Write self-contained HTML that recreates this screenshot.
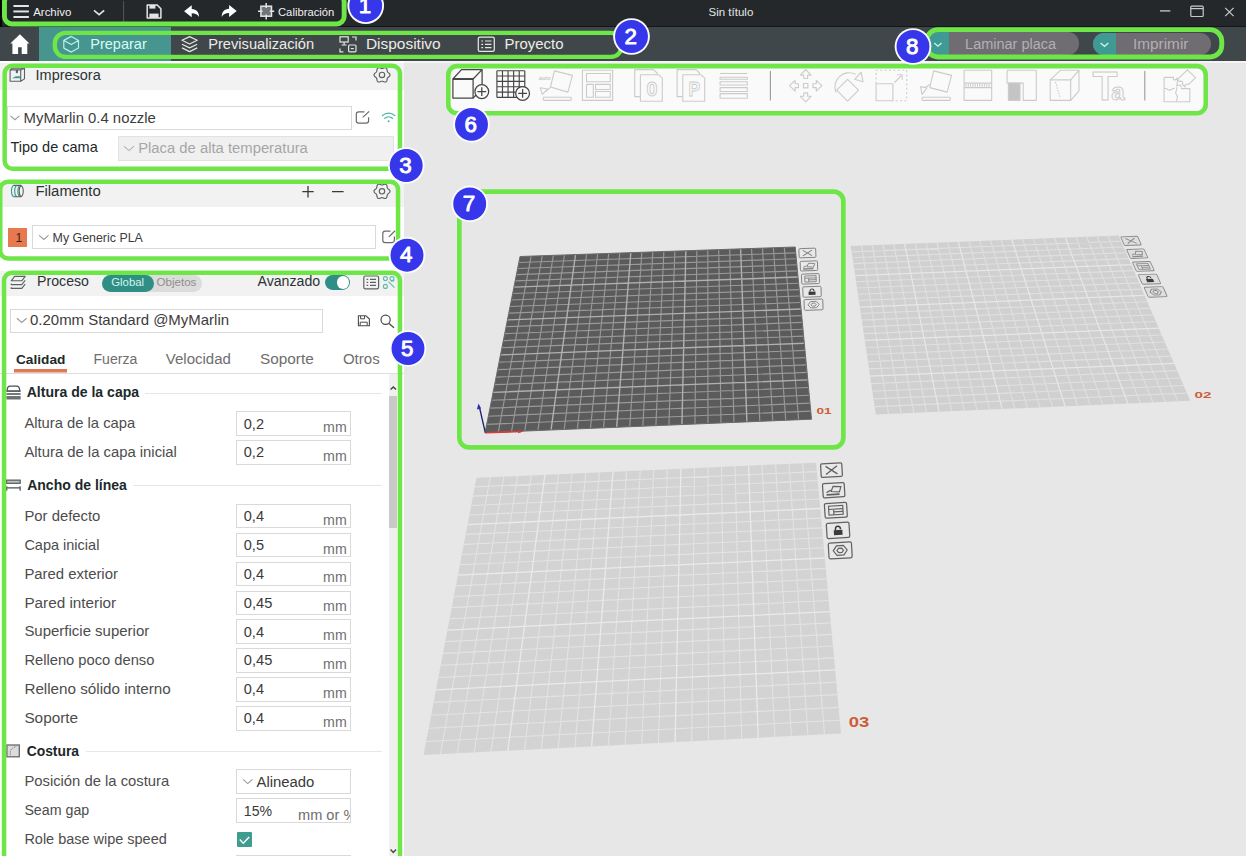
<!DOCTYPE html>
<html lang="es"><head><meta charset="utf-8"><title>Sin título</title>
<style>
html,body{margin:0;padding:0}
body{width:1246px;height:856px;overflow:hidden;position:relative;background:#e7e7e7;font-family:"Liberation Sans",sans-serif}
.b{position:absolute;box-sizing:border-box}
.t{position:absolute;white-space:nowrap;display:block}
svg{overflow:visible}
</style></head><body>
<div class="b" style="left:0.00px;top:0.00px;width:1246.00px;height:26.20px;background:#25282b;"></div>
<div class="b" style="left:0.00px;top:26.20px;width:1246.00px;height:0.80px;background:#141618;"></div>
<div class="b" style="left:0.00px;top:27.00px;width:1246.00px;height:34.00px;background:#40474a;"></div>
<div class="b" style="left:0.00px;top:0.00px;width:2.00px;height:26.50px;background:#050505;"></div>
<div class="b" style="left:39.00px;top:27.00px;width:131.60px;height:34.00px;background:#46968f;"></div>
<span class="t" style="left:33.20px;top:5.00px;font-size:11.45px;line-height:15px;color:#f2f2f2;">Archivo</span>
<span class="t" style="left:278.00px;top:5.00px;font-size:11.25px;line-height:15px;color:#f2f2f2;">Calibración</span>
<span class="t" style="left:708.50px;top:5.00px;font-size:11.52px;line-height:15px;color:#e6e6e6;">Sin título</span>
<span class="t" style="left:90.30px;top:35.00px;font-size:14.50px;line-height:19px;color:#d8fbf6;">Preparar</span>
<span class="t" style="left:208.20px;top:35.00px;font-size:14.66px;line-height:19px;color:#ecece6;">Previsualización</span>
<span class="t" style="left:365.90px;top:34.00px;font-size:15.47px;line-height:20px;color:#ecece6;">Dispositivo</span>
<span class="t" style="left:504.60px;top:34.00px;font-size:14.93px;line-height:19px;color:#ecece6;">Proyecto</span>
<div class="b" style="left:926.00px;top:32.40px;width:152.70px;height:22.30px;background:#6f6c72;border-radius:11.2px;overflow:hidden;"><div class="b" style="left:0;top:0;width:22.5px;height:100%;background:#3f9a94"></div></div>
<div class="b" style="left:1092.80px;top:32.60px;width:118.70px;height:22.10px;background:#6f6c72;border-radius:11.2px;overflow:hidden;"><div class="b" style="left:0;top:0;width:23.6px;height:100%;background:#3f9a94"></div></div>
<span class="t" style="left:965.10px;top:35.00px;font-size:14.49px;line-height:19px;color:#b3afb5;">Laminar placa</span>
<span class="t" style="left:1133.10px;top:34.00px;font-size:15.32px;line-height:20px;color:#b3afb5;">Imprimir</span>
<svg class="b" style="left:0.00px;top:0.00px;" width="1246.00" height="62.00" viewBox="0 0 1246.00 62.00"><path d="M13.4 6.0H28.9" stroke="#e4e4e4" stroke-width="1.95" fill="none"/><path d="M13.4 11.45H28.9" stroke="#e4e4e4" stroke-width="1.95" fill="none"/><path d="M13.4 17.0H28.9" stroke="#e4e4e4" stroke-width="1.95" fill="none"/><path d="M94 10.3l5.1 4.4 5.1-4.4" stroke="#e4e4e4" stroke-width="1.6" fill="none"/><path d="M123.6 1V22" stroke="#54575a" stroke-width="1"/><path d="M147.2 5h10l3.7 3.7v9.2h-13.7z" stroke="#e4e4e4" stroke-width="1.5" fill="none" stroke-linejoin="round"/><rect x="149.4" y="5" width="6" height="3.6" fill="#e4e4e4"/><rect x="149.4" y="13.6" width="9.2" height="4.3" fill="#e4e4e4"/><path d="M184.1 11.3l7.6-6v3.6c4.6.2 7.3 3 7.4 8.2-1.6-2.6-3.7-3.8-7.4-3.8v3.9z" fill="#fff"/><path d="M236.7 11.1l-7.6-6v3.6c-4.6.2-7.3 3-7.4 8.2 1.6-2.6 3.7-3.8 7.4-3.8v3.9z" fill="#fff"/><rect x="260.9" y="6.2" width="10.6" height="10" fill="#707476" stroke="#e4e4e4" stroke-width="1.5"/><path d="M266.2 3v5M266.2 14.5v5M258 11.2h4.6M269.8 11.2h4.4" stroke="#e4e4e4" stroke-width="1.5"/><path d="M1160 10.9h10.3" stroke="#c9c9c9" stroke-width="1.3"/><rect x="1190.8" y="6.1" width="12.4" height="10.4" rx="1" fill="none" stroke="#c9c9c9" stroke-width="1.2"/><path d="M1190.8 8.6h12.4" stroke="#c9c9c9" stroke-width="1.2"/><path d="M1225.2 7.8l8.4 8.4M1233.6 7.8l-8.4 8.4" stroke="#c9c9c9" stroke-width="1.2"/><path d="M19.9 34.3L29.4 43.4H27.3V54.1H21.7V47.3H18.1V54.1H12.4V43.4H10.3Z" fill="#fff"/><path d="M71.3 36.4l7.2 4v7.7l-7.2 4-7.5-4v-7.7zM63.8 40.4l7.5 4.2 7.2-4.2" fill="none" stroke="#b4f3ea" stroke-width="1.2" stroke-linejoin="round"/><path d="M189.6 36.6l7.6 3.7-7.6 3.7-7.6-3.7zM182 44.2l7.6 3.7 7.6-3.7M182 47.9l7.6 3.7 7.6-3.7" fill="none" stroke="#e6e6e0" stroke-width="1.25" stroke-linejoin="round"/><rect x="340" y="36.8" width="8.2" height="5.2" fill="none" stroke="#e6e6e0" stroke-width="1.2"/><path d="M344.1 42v2.6M341.6 45h5" stroke="#e6e6e0" stroke-width="1.2"/><path d="M352 37h4v3.4M340 48.4v3.4h3.4" fill="none" stroke="#e6e6e0" stroke-width="1.2"/><rect x="348.6" y="45" width="7.4" height="6.8" rx="1" fill="none" stroke="#e6e6e0" stroke-width="1.2"/><path d="M350.8 48.6h3" stroke="#e6e6e0" stroke-width="1.2"/><rect x="478.3" y="37.2" width="16" height="14.2" rx="1.6" fill="none" stroke="#e6e6e0" stroke-width="1.25"/><path d="M481.3 41h1.8M485 41h6.4M481.3 44.3h1.8M485 44.3h6.4M481.3 47.6h1.8M485 47.6h6.4" stroke="#e6e6e0" stroke-width="1.2"/><path d="M934.3 43l3.6 3.2 3.6-3.2" fill="none" stroke="#c8f5ee" stroke-width="1.3"/><path d="M1100.6 43l3.9 3.3 3.9-3.3" fill="none" stroke="#c8f5ee" stroke-width="1.3"/></svg>
<div class="b" style="left:0.00px;top:61.00px;width:404.00px;height:795.00px;background:#fff;"></div>
<div class="b" style="left:0.00px;top:63.00px;width:404.00px;height:27.30px;background:#f2f2f2;"></div>
<div class="b" style="left:0.00px;top:180.00px;width:404.00px;height:27.40px;background:#f2f2f2;"></div>
<div class="b" style="left:0.00px;top:271.00px;width:404.00px;height:24.70px;background:#f2f2f2;"></div>
<span class="t" style="left:35.60px;top:66.00px;font-size:14.47px;line-height:19px;color:#2b3436;">Impresora</span>
<span class="t" style="left:35.40px;top:182.00px;font-size:14.90px;line-height:19px;color:#2b3436;">Filamento</span>
<span class="t" style="left:37.10px;top:272.00px;font-size:14.14px;line-height:18px;color:#2b3436;">Proceso</span>
<div class="b" style="left:6.50px;top:106.00px;width:345.00px;height:24.40px;background:#fff;border:1px solid #d9d9d9;"></div>
<span class="t" style="left:23.60px;top:109.00px;font-size:14.88px;line-height:19px;color:#3c3c3c;">MyMarlin 0.4 nozzle</span>
<span class="t" style="left:10.40px;top:138.00px;font-size:14.51px;line-height:19px;color:#20282a;">Tipo de cama</span>
<div class="b" style="left:117.50px;top:136.00px;width:276.70px;height:24.60px;background:#f0f0f0;border:1px solid #e2e2e2;"></div>
<span class="t" style="left:138.20px;top:139.00px;font-size:14.82px;line-height:19px;color:#a6a6a6;">Placa de alta temperatura</span>
<div class="b" style="left:7.90px;top:228.10px;width:19.10px;height:19.10px;background:#e8784f;"></div>
<span class="t" style="left:15.40px;top:230.00px;font-size:12.20px;line-height:16px;color:#3a2018;">1</span>
<div class="b" style="left:32.00px;top:225.10px;width:343.70px;height:24.40px;background:#fff;border:1px solid #d9d9d9;"></div>
<span class="t" style="left:52.60px;top:230.00px;font-size:12.40px;line-height:16px;color:#3c3c3c;">My Generic PLA</span>
<div class="b" style="left:102.00px;top:274.60px;width:100.30px;height:17.40px;background:#dcdcdc;border-radius:8.7px;"></div>
<div class="b" style="left:102.00px;top:274.60px;width:51.70px;height:17.40px;background:#2f8f85;border-radius:8.7px;"></div>
<span class="t" style="left:111.20px;top:275.00px;font-size:11.38px;line-height:15px;color:#d4f4ee;">Global</span>
<span class="t" style="left:156.40px;top:274.00px;font-size:11.61px;line-height:15px;color:#8e8e8e;">Objetos</span>
<span class="t" style="left:257.50px;top:272.00px;font-size:14.15px;line-height:18px;color:#2b3436;">Avanzado</span>
<div class="b" style="left:324.70px;top:275.10px;width:25.80px;height:14.70px;background:#2f8f85;border-radius:7.4px;"><div class="b" style="right:1px;top:1px;width:12.7px;height:12.7px;border-radius:50%;background:#fff"></div></div>
<div class="b" style="left:10.10px;top:308.50px;width:312.60px;height:24.10px;background:#fff;border:1px solid #d9d9d9;"></div>
<span class="t" style="left:30.00px;top:310.00px;font-size:14.98px;line-height:19px;color:#3c3c3c;">0.20mm Standard @MyMarlin</span>
<span class="t" style="left:16.00px;top:351.00px;font-size:13.68px;line-height:18px;color:#20282a;font-weight:700;">Calidad</span>
<span class="t" style="left:93.50px;top:350.00px;font-size:14.09px;line-height:18px;color:#6e6e6e;">Fuerza</span>
<span class="t" style="left:165.80px;top:349.00px;font-size:15.02px;line-height:20px;color:#6e6e6e;">Velocidad</span>
<span class="t" style="left:260.00px;top:349.00px;font-size:15.35px;line-height:20px;color:#6e6e6e;">Soporte</span>
<span class="t" style="left:342.90px;top:349.00px;font-size:15.05px;line-height:20px;color:#6e6e6e;">Otros</span>
<div class="b" style="left:13.50px;top:369.00px;width:53.90px;height:3.00px;background:#e07a54;"></div>
<div class="b" style="left:13.50px;top:372.00px;width:53.90px;height:1.00px;background:#efb9a5;"></div>
<div class="b" style="left:0.00px;top:372.80px;width:404.00px;height:1.00px;background:#dedede;"></div>
<div class="b" style="left:389.20px;top:374.00px;width:8.20px;height:482.00px;background:#f0f0f0;"></div>
<div class="b" style="left:389.40px;top:395.50px;width:7.80px;height:132.30px;background:#c9c9c9;"></div>
<span class="t" style="left:26.70px;top:383.00px;font-size:14.06px;line-height:18px;color:#20282a;font-weight:700;">Altura de la capa</span><div class="b" style="left:144.50px;top:392.60px;width:237.50px;height:1.00px;background:#e6e6e6;"></div>
<span class="t" style="left:27.20px;top:476.00px;font-size:14.02px;line-height:18px;color:#20282a;font-weight:700;">Ancho de línea</span><div class="b" style="left:133.00px;top:485.00px;width:249.00px;height:1.00px;background:#e6e6e6;"></div>
<span class="t" style="left:26.70px;top:742.00px;font-size:13.87px;line-height:18px;color:#20282a;font-weight:700;">Costura</span><div class="b" style="left:86.00px;top:750.60px;width:296.00px;height:1.00px;background:#e6e6e6;"></div>
<span class="t" style="left:24.40px;top:414.00px;font-size:14.77px;line-height:19px;color:#4d4d4d;">Altura de la capa</span><div class="b" style="left:236.10px;top:411.40px;width:114.60px;height:24.60px;background:#fff;border:1px solid #d9d9d9;"></div><span class="t" style="left:243.80px;top:415.00px;font-size:14.53px;line-height:19px;color:#3a3a3a;">0,2</span><span class="t" style="left:323.10px;top:418.00px;font-size:14.17px;line-height:18px;color:#6e6e6e;">mm</span>
<span class="t" style="left:24.40px;top:443.00px;font-size:14.84px;line-height:19px;color:#4d4d4d;">Altura de la capa inicial</span><div class="b" style="left:236.10px;top:440.10px;width:114.60px;height:24.60px;background:#fff;border:1px solid #d9d9d9;"></div><span class="t" style="left:243.80px;top:443.00px;font-size:14.53px;line-height:19px;color:#3a3a3a;">0,2</span><span class="t" style="left:323.10px;top:447.00px;font-size:14.17px;line-height:18px;color:#6e6e6e;">mm</span>
<span class="t" style="left:24.40px;top:507.00px;font-size:14.86px;line-height:19px;color:#4d4d4d;">Por defecto</span><div class="b" style="left:236.10px;top:503.80px;width:114.60px;height:24.60px;background:#fff;border:1px solid #d9d9d9;"></div><span class="t" style="left:243.80px;top:507.00px;font-size:14.53px;line-height:19px;color:#3a3a3a;">0,4</span><span class="t" style="left:323.10px;top:511.00px;font-size:14.17px;line-height:18px;color:#6e6e6e;">mm</span>
<span class="t" style="left:24.40px;top:536.00px;font-size:14.51px;line-height:19px;color:#4d4d4d;">Capa inicial</span><div class="b" style="left:236.10px;top:532.70px;width:114.60px;height:24.60px;background:#fff;border:1px solid #d9d9d9;"></div><span class="t" style="left:243.80px;top:536.00px;font-size:14.53px;line-height:19px;color:#3a3a3a;">0,5</span><span class="t" style="left:323.10px;top:540.00px;font-size:14.17px;line-height:18px;color:#6e6e6e;">mm</span>
<span class="t" style="left:24.40px;top:565.00px;font-size:14.90px;line-height:19px;color:#4d4d4d;">Pared exterior</span><div class="b" style="left:236.10px;top:561.60px;width:114.60px;height:24.60px;background:#fff;border:1px solid #d9d9d9;"></div><span class="t" style="left:243.80px;top:565.00px;font-size:14.53px;line-height:19px;color:#3a3a3a;">0,4</span><span class="t" style="left:323.10px;top:568.00px;font-size:14.17px;line-height:18px;color:#6e6e6e;">mm</span>
<span class="t" style="left:24.40px;top:593.00px;font-size:15.30px;line-height:20px;color:#4d4d4d;">Pared interior</span><div class="b" style="left:236.10px;top:590.50px;width:114.60px;height:24.60px;background:#fff;border:1px solid #d9d9d9;"></div><span class="t" style="left:243.80px;top:594.00px;font-size:14.65px;line-height:19px;color:#3a3a3a;">0,45</span><span class="t" style="left:323.10px;top:597.00px;font-size:14.17px;line-height:18px;color:#6e6e6e;">mm</span>
<span class="t" style="left:24.40px;top:621.00px;font-size:14.98px;line-height:19px;color:#4d4d4d;">Superficie superior</span><div class="b" style="left:236.10px;top:619.40px;width:114.60px;height:24.60px;background:#fff;border:1px solid #d9d9d9;"></div><span class="t" style="left:243.80px;top:623.00px;font-size:14.53px;line-height:19px;color:#3a3a3a;">0,4</span><span class="t" style="left:323.10px;top:626.00px;font-size:14.17px;line-height:18px;color:#6e6e6e;">mm</span>
<span class="t" style="left:24.40px;top:651.00px;font-size:14.71px;line-height:19px;color:#4d4d4d;">Relleno poco denso</span><div class="b" style="left:236.10px;top:648.30px;width:114.60px;height:24.60px;background:#fff;border:1px solid #d9d9d9;"></div><span class="t" style="left:243.80px;top:651.00px;font-size:14.65px;line-height:19px;color:#3a3a3a;">0,45</span><span class="t" style="left:323.10px;top:655.00px;font-size:14.17px;line-height:18px;color:#6e6e6e;">mm</span>
<span class="t" style="left:24.40px;top:679.00px;font-size:15.23px;line-height:20px;color:#4d4d4d;">Relleno sólido interno</span><div class="b" style="left:236.10px;top:677.20px;width:114.60px;height:24.60px;background:#fff;border:1px solid #d9d9d9;"></div><span class="t" style="left:243.80px;top:680.00px;font-size:14.53px;line-height:19px;color:#3a3a3a;">0,4</span><span class="t" style="left:323.10px;top:684.00px;font-size:14.17px;line-height:18px;color:#6e6e6e;">mm</span>
<span class="t" style="left:24.40px;top:708.00px;font-size:15.35px;line-height:20px;color:#4d4d4d;">Soporte</span><div class="b" style="left:236.10px;top:706.10px;width:114.60px;height:24.60px;background:#fff;border:1px solid #d9d9d9;"></div><span class="t" style="left:243.80px;top:709.00px;font-size:14.53px;line-height:19px;color:#3a3a3a;">0,4</span><span class="t" style="left:323.10px;top:713.00px;font-size:14.17px;line-height:18px;color:#6e6e6e;">mm</span>
<span class="t" style="left:24.40px;top:772.00px;font-size:14.80px;line-height:19px;color:#4d4d4d;">Posición de la costura</span><div class="b" style="left:236.10px;top:769.40px;width:114.60px;height:24.60px;background:#fff;border:1px solid #d9d9d9;"></div>
<span class="t" style="left:256.50px;top:773.00px;font-size:14.86px;line-height:19px;color:#3a3a3a;">Alineado</span>
<span class="t" style="left:24.40px;top:801.00px;font-size:14.23px;line-height:19px;color:#4d4d4d;">Seam gap</span><div class="b" style="left:236.10px;top:798.40px;width:114.60px;height:24.60px;background:#fff;border:1px solid #d9d9d9;"></div><span class="t" style="left:243.80px;top:802.00px;font-size:14.10px;line-height:18px;color:#3a3a3a;">15%</span>
<div class="b" style="left:290.00px;top:799.50px;width:59.70px;height:22.10px;overflow:hidden;"><span class="t" style="left:8.00px;top:6.00px;font-size:14.60px;line-height:19px;color:#6e6e6e;">mm or %</span></div>
<span class="t" style="left:24.40px;top:830.00px;font-size:14.47px;line-height:19px;color:#4d4d4d;">Role base wipe speed</span>
<div class="b" style="left:236.80px;top:832.20px;width:15.20px;height:15.20px;background:#3f9c90;border-radius:1px;"></div>
<div class="b" style="left:236.10px;top:855.20px;width:114.60px;height:1.80px;background:#fff;border:1px solid #d9d9d9;"></div>
<svg class="b" style="left:0.00px;top:0.00px;" width="404.00" height="856.00" viewBox="0 0 404.00 856.00"><path d="M10.1 69.9h10.6v11.4H10.1zM10.1 69.9l2.2-1.6h12.2v10.6l-3.8 2.4M20.7 69.9l3.8-1.6" fill="none" stroke="#5a6264" stroke-width="1.1" stroke-linejoin="round"/><path d="M15.8 70v2.6l1.1 1 1.1-1V70" fill="#5a6264"/><path d="M12 78.2l3.8-2h4.9v2z" fill="#3f9c90"/><path d="M390.00 74.90L389.86 75.59L389.46 76.22L388.91 76.75L388.32 77.20L387.81 77.61L387.46 78.05L387.25 78.58L387.15 79.22L387.06 79.96L386.87 80.70L386.52 81.36L386.00 81.83L385.33 82.05L384.59 82.02L383.85 81.81L383.17 81.52L382.56 81.29L382.00 81.20L381.44 81.29L380.83 81.52L380.15 81.81L379.41 82.02L378.67 82.05L378.00 81.83L377.48 81.36L377.13 80.70L376.94 79.96L376.85 79.22L376.75 78.58L376.54 78.05L376.19 77.61L375.68 77.20L375.09 76.75L374.54 76.22L374.14 75.59L374.00 74.90L374.14 74.21L374.54 73.58L375.09 73.05L375.68 72.60L376.19 72.19L376.54 71.75L376.75 71.22L376.85 70.58L376.94 69.84L377.13 69.10L377.48 68.44L378.00 67.97L378.67 67.75L379.41 67.78L380.15 67.99L380.83 68.28L381.44 68.51L382.00 68.60L382.56 68.51L383.17 68.28L383.85 67.99L384.59 67.78L385.33 67.75L386.00 67.97L386.52 68.44L386.87 69.10L387.06 69.84L387.15 70.58L387.25 71.22L387.46 71.75L387.81 72.19L388.32 72.60L388.91 73.05L389.46 73.58L389.86 74.21Z" fill="none" stroke="#5a6264" stroke-width="1.15" stroke-linejoin="round"/><circle cx="382" cy="74.9" r="2.7" fill="none" stroke="#5a6264" stroke-width="1.15"/><path d="M390.00 191.30L389.86 191.99L389.46 192.62L388.91 193.15L388.32 193.60L387.81 194.01L387.46 194.45L387.25 194.98L387.15 195.62L387.06 196.36L386.87 197.10L386.52 197.76L386.00 198.23L385.33 198.45L384.59 198.42L383.85 198.21L383.17 197.92L382.56 197.69L382.00 197.60L381.44 197.69L380.83 197.92L380.15 198.21L379.41 198.42L378.67 198.45L378.00 198.23L377.48 197.76L377.13 197.10L376.94 196.36L376.85 195.62L376.75 194.98L376.54 194.45L376.19 194.01L375.68 193.60L375.09 193.15L374.54 192.62L374.14 191.99L374.00 191.30L374.14 190.61L374.54 189.98L375.09 189.45L375.68 189.00L376.19 188.59L376.54 188.15L376.75 187.62L376.85 186.98L376.94 186.24L377.13 185.50L377.48 184.84L378.00 184.37L378.67 184.15L379.41 184.18L380.15 184.39L380.83 184.68L381.44 184.91L382.00 185.00L382.56 184.91L383.17 184.68L383.85 184.39L384.59 184.18L385.33 184.15L386.00 184.37L386.52 184.84L386.87 185.50L387.06 186.24L387.15 186.98L387.25 187.62L387.46 188.15L387.81 188.59L388.32 189.00L388.91 189.45L389.46 189.98L389.86 190.61Z" fill="none" stroke="#5a6264" stroke-width="1.15" stroke-linejoin="round"/><circle cx="382" cy="191.3" r="2.7" fill="none" stroke="#5a6264" stroke-width="1.15"/><path d="M10.5 115.842L14.95 119.758L19.4 115.842" fill="none" stroke="#9a9a9a" stroke-width="1.1"/><path d="M123.9 146.178L128.95 150.622L134 146.178" fill="none" stroke="#b4b4b4" stroke-width="1.1"/><path d="M39.1 235.332L43.8 239.46800000000002L48.5 235.332" fill="none" stroke="#9a9a9a" stroke-width="1.1"/><path d="M16.9 318.26599999999996L21.75 322.534L26.6 318.26599999999996" fill="none" stroke="#9a9a9a" stroke-width="1.1"/><path d="M243.1 779.454L247.75 783.546L252.4 779.454" fill="none" stroke="#9a9a9a" stroke-width="1.1"/><path d="M364.44 111.80H358.70a2.4 2.4 0 0 0-2.4 2.4V120.70a2.4 2.4 0 0 0 2.4 2.4H366.20a2.4 2.4 0 0 0 2.4-2.4V117.15" fill="none" stroke="#6a6a6a" stroke-width="1.2"/><path d="M362.75 117.41L369.20 111.40" stroke="#6a6a6a" stroke-width="1.2"/><path d="M390.51 231.20H385.20a2.4 2.4 0 0 0-2.4 2.4V240.20a2.4 2.4 0 0 0 2.4 2.4H392.00a2.4 2.4 0 0 0 2.4-2.4V236.60" fill="none" stroke="#6a6a6a" stroke-width="1.2"/><path d="M388.90 236.86L395.00 230.80" stroke="#6a6a6a" stroke-width="1.2"/><path d="M382.4 115.6a9 9 0 0 1 12.4 0M384.8 118.3a5.6 5.6 0 0 1 7.6 0" fill="none" stroke="#49b3a3" stroke-width="1.3" stroke-linecap="round"/><circle cx="388.6" cy="121.2" r="1" fill="#49b3a3"/><path d="M13.4 185.4c-2.6 2-2.6 9.4 0 11.4M16.6 185.4c-2.6 2-2.6 9.4 0 11.4M19.8 185.4c-2.6 2-2.6 9.4 0 11.4" fill="none" stroke="#3f9c90" stroke-width="1.1"/><path d="M13.4 185.4h7.6c3 1.6 3 9.8 0 11.4h-7.6M21 185.4c-2.4 2-2.4 9.4 0 11.4" fill="none" stroke="#5a6264" stroke-width="1.1"/><path d="M302.3 191.7h11.4M308 186v11.4M332 191.6h11.6" stroke="#3a3a3a" stroke-width="1.3"/><path d="M14.6 276.4h10.6l-3.4 4.4H11.2z" fill="none" stroke="#5a6264" stroke-width="1.1" stroke-linejoin="round"/><path d="M11.2 283.4l0 1.2h10.6l3.4-4.2M11.2 287.2l0 1.2h10.6l3.4-4.2" fill="none" stroke="#5a6264" stroke-width="1.1" stroke-linejoin="round"/><rect x="363.8" y="276" width="14.8" height="12.8" rx="1.6" fill="none" stroke="#5a6264" stroke-width="1.2"/><path d="M366.6 279.4h1.6M370 279.4h6M366.6 282.4h1.6M370 282.4h6M366.6 285.4h1.6M370 285.4h6" stroke="#5a6264" stroke-width="1.1"/><circle cx="385.4" cy="278.6" r="2" fill="none" stroke="#5fb9ad" stroke-width="1.1"/><circle cx="392" cy="278.6" r="2" fill="none" stroke="#5fb9ad" stroke-width="1.1"/><circle cx="385.4" cy="286.4" r="2" fill="none" stroke="#5fb9ad" stroke-width="1.1"/><path d="M388.4 281.6l6 6M391 281.2l3.4-.4" stroke="#5fb9ad" stroke-width="1.1"/><path d="M358.4 315.8h7.6l3.4 3.2v6.8h-11z" fill="none" stroke="#4a4a4a" stroke-width="1.1" stroke-linejoin="round"/><path d="M360.6 315.8v3h4v-3M360.2 325.6v-3.4h7v3.4" fill="none" stroke="#4a4a4a" stroke-width="1"/><circle cx="385.6" cy="319.8" r="4.6" fill="none" stroke="#4a4a4a" stroke-width="1.2"/><path d="M389 323.4l5 4.4" stroke="#4a4a4a" stroke-width="1.3"/><path d="M7 391c.2-3.4 1.8-4.8 3-4.8h6.8c1.4 0 2.8 1.6 3 4.8z" fill="none" stroke="#4a4f52" stroke-width="1.2"/><path d="M6.4 391.1H20.6M6.4 394H20.6M6.4 396.9H20.6" stroke="#4a4f52" stroke-width="1.3"/><rect x="6.4" y="396.9" width="14.2" height="2.6" fill="#6c7073"/><rect x="6.6" y="480.1" width="13.6" height="3.2" fill="#bdbdbd" stroke="#4a4f52" stroke-width="1.1"/><path d="M6.6 487.8H20.2M6.7 486.2v4.6M20.1 486.2v4.6" stroke="#4a4f52" stroke-width="1.2"/><rect x="6.9" y="745" width="12.4" height="11.8" fill="#dcdcdc" stroke="#66696c" stroke-width="1.3"/><path d="M10.2 755v-3.4c.4-2.4 2.6-4.2 6.6-5.4" fill="none" stroke="#777" stroke-width="1" stroke-dasharray="1.4 1"/><path d="M239.8 839.6l3.4 3.6 6-6.2" fill="none" stroke="#fff" stroke-width="1.5"/><path d="M390.6 389.6l2.7-2.6 2.7 2.6M390.6 849.6l2.7 2.8 2.7-2.8" fill="none" stroke="#444" stroke-width="1.4"/></svg>
<svg class="b" style="left:404.00px;top:61.00px;" width="842.00" height="795.00" viewBox="404 61 842 795"><polygon points="476.50,477.80 816.00,462.70 841.00,733.50 423.60,755.00" fill="#d3d3d3"/><path d="M490.19 477.19L440.47 754.13M474.77 486.88L816.82 471.59M503.88 476.58L457.32 753.26M473.01 496.10L817.65 480.61M517.55 475.97L474.16 752.40M471.22 505.46L818.50 489.77M531.22 475.37L490.99 751.53M469.41 514.96L819.36 499.07M558.52 474.15L524.60 749.80M465.69 534.42L821.11 518.10M572.16 473.55L541.38 748.93M463.79 544.38L822.01 527.84M585.79 472.94L558.15 748.07M461.86 554.50L822.93 537.73M599.40 472.33L574.90 747.21M459.90 564.78L823.85 547.78M626.61 471.12L608.36 745.48M455.88 585.84L825.76 568.37M640.20 470.52L625.07 744.62M453.82 596.63L826.73 578.92M653.78 469.92L641.77 743.76M451.73 607.60L827.72 589.64M667.35 469.31L658.45 742.90M449.60 618.75L828.72 600.53M694.46 468.11L691.77 741.19M445.24 641.63L830.79 622.88M708.00 467.50L708.41 740.33M443.00 653.36L831.85 634.33M721.54 466.90L725.03 739.47M440.72 665.30L832.92 645.99M735.06 466.30L741.64 738.62M438.40 677.44L834.02 657.84M762.08 465.10L774.82 736.91M433.64 702.37L836.26 682.17M775.57 464.50L791.38 736.06M431.20 715.18L837.41 694.66M789.06 463.90L807.94 735.20M428.71 728.21L838.59 707.38M802.53 463.30L824.48 734.35M426.18 741.48L839.78 720.32" stroke="#e3e3e3" stroke-width="1.1" fill="none"/><path d="M544.88 474.76L507.80 750.66M467.57 524.62L820.23 508.51M613.01 471.73L591.64 746.34M457.91 575.22L824.80 558.00M680.91 468.71L675.11 742.04M447.44 630.09L829.75 611.61M748.57 465.70L758.23 737.76M436.04 689.80L835.13 669.90" stroke="#eaeaea" stroke-width="1.3" fill="none"/><polygon points="850.80,246.10 1118.60,235.60 1190.30,400.80 875.80,414.50" fill="#d0d0d0"/><path d="M861.58 245.68L888.48 413.95M851.66 251.86L1121.06 241.26M872.36 245.25L901.15 413.40M852.52 257.69L1123.54 246.98M883.13 244.83L913.81 412.84M853.40 263.59L1126.06 252.78M893.90 244.41L926.46 412.29M854.28 269.56L1128.60 258.64M915.41 243.57L951.75 411.19M856.09 281.73L1133.79 270.59M926.16 243.15L964.38 410.64M857.01 287.93L1136.43 276.68M936.90 242.72L977.00 410.09M857.94 294.21L1139.10 282.84M947.63 242.30L989.61 409.54M858.89 300.57L1141.81 289.08M969.09 241.46L1014.81 408.44M860.81 313.53L1147.33 301.80M979.81 241.04L1027.40 407.90M861.79 320.13L1150.14 308.28M990.52 240.62L1039.98 407.35M862.78 326.83L1152.99 314.84M1001.22 240.20L1052.55 406.80M863.79 333.61L1155.88 321.49M1022.62 239.36L1077.67 405.71M865.84 347.43L1161.77 335.06M1033.31 238.94L1090.21 405.16M866.89 354.49L1164.77 341.97M1043.99 238.53L1102.75 404.61M867.95 361.64L1167.81 348.98M1054.66 238.11L1115.28 404.07M869.03 368.88L1170.89 356.09M1076.00 237.27L1140.32 402.98M871.22 383.67L1177.19 370.59M1086.66 236.85L1152.83 402.43M872.34 391.22L1180.40 377.98M1097.31 236.43L1165.33 401.89M873.48 398.87L1183.65 385.48M1107.96 236.02L1177.82 401.34M874.63 406.63L1186.95 393.09" stroke="#e0e0e0" stroke-width="1.1" fill="none"/><path d="M904.66 243.99L939.11 411.74M855.18 275.61L1131.18 264.58M958.36 241.88L1002.21 408.99M859.84 307.01L1144.55 295.40M1011.92 239.78L1065.11 406.25M864.81 340.47L1158.80 328.23M1065.34 237.69L1127.81 403.52M870.12 376.22L1174.02 363.29" stroke="#e7e7e7" stroke-width="1.25" fill="none"/><polygon points="520.00,256.50 795.20,247.00 811.50,419.20 485.10,432.70" fill="#5b5b5b"/><path d="M531.12 256.12L498.32 432.15M518.82 262.48L795.75 252.85M542.24 255.73L511.52 431.61M517.62 268.53L796.31 258.78M553.34 255.35L524.71 431.06M516.40 274.66L796.88 264.78M564.43 254.97L537.89 430.52M515.17 280.87L797.46 270.86M586.59 254.20L564.20 429.43M512.67 293.53L798.63 283.25M597.66 253.82L577.34 428.88M511.39 299.99L799.23 289.56M608.71 253.44L590.46 428.34M510.09 306.53L799.83 295.96M619.76 253.06L603.57 427.80M508.78 313.16L800.45 302.45M641.82 252.29L629.75 426.72M506.10 326.69L801.70 315.68M652.84 251.91L642.82 426.18M504.73 333.59L802.34 322.42M663.85 251.53L655.87 425.64M503.35 340.58L802.99 329.26M674.85 251.15L668.92 425.10M501.94 347.68L803.64 336.19M696.81 250.40L694.96 424.02M499.07 362.16L804.98 350.35M707.78 250.02L707.96 423.48M497.61 369.56L805.67 357.57M718.74 249.64L720.95 422.95M496.12 377.06L806.36 364.90M729.69 249.26L733.93 422.41M494.61 384.67L807.06 372.32M751.57 248.51L759.84 421.34M491.53 400.21L808.50 387.50M762.49 248.13L772.77 420.80M489.96 408.16L809.23 395.25M773.40 247.75L785.69 420.27M488.36 416.22L809.98 403.12M784.31 247.38L798.60 419.73M486.74 424.40L810.73 411.10" stroke="#999999" stroke-width="1.15" fill="none"/><path d="M575.52 254.58L551.05 429.97M513.93 287.16L798.04 277.01M630.80 252.68L616.67 427.26M507.45 319.88L801.07 309.02M685.83 250.78L681.94 424.56M500.52 354.87L804.31 343.22M740.64 248.88L746.89 421.87M493.09 392.38L807.78 379.86" stroke="#b0b0b0" stroke-width="1.4" fill="none"/><polygon points="520.00,256.50 795.20,247.00 811.50,419.20 485.10,432.70" fill="none" stroke="#6a6a6a" stroke-width="1"/><g opacity="1.0"><g transform="rotate(-2 807.40 253.00) translate(807.40 253.00) skewX(0) translate(-807.40 -253.00)"><rect x="799.00" y="248.40" width="16.80" height="9.20" rx="0.92" fill="#e8e8e8" stroke="#808080" stroke-width="0.95"/><path d="M802.86 250.24L811.94 255.76M811.94 250.24L802.86 255.76" stroke="#808080" stroke-width="1.04"/></g><g transform="rotate(-2 808.94 265.92) translate(808.94 265.92) skewX(0) translate(-808.94 -265.92)"><rect x="800.30" y="261.12" width="17.28" height="9.60" rx="0.96" fill="#e8e8e8" stroke="#808080" stroke-width="0.95"/><path d="M803.06 268.80h10.37" stroke="#808080" stroke-width="1.42"/><path d="M806.87 266.69l1.73 -3.46l6.22 0.58l-1.38 3.46z" fill="#e8e8e8" stroke="#808080" stroke-width="0.90"/><path d="M806.52 265.73l-3.46 1.54" stroke="#808080" stroke-width="0.90"/></g><g transform="rotate(-2 810.48 278.84) translate(810.48 278.84) skewX(0) translate(-810.48 -278.84)"><rect x="801.60" y="273.84" width="17.76" height="10.00" rx="1.00" fill="#e8e8e8" stroke="#808080" stroke-width="0.95"/><rect x="804.80" y="275.84" width="11.37" height="6.00" fill="none" stroke="#808080" stroke-width="0.90"/><path d="M804.80 278.04h11.37M808.70 278.04v3.80M808.70 279.84h7.46" stroke="#808080" stroke-width="0.90"/></g><g transform="rotate(-2 812.02 291.76) translate(812.02 291.76) skewX(0) translate(-812.02 -291.76)"><rect x="802.90" y="286.56" width="18.24" height="10.40" rx="1.04" fill="#e8e8e8" stroke="#808080" stroke-width="0.95"/><rect x="808.55" y="291.55" width="6.93" height="3.33" fill="#3c3c3c"/><path d="M810.01 291.76v-1.04a2.01 1.87 0 0 1 4.01 0v0.42" fill="none" stroke="#3c3c3c" stroke-width="1.14"/></g><g transform="rotate(-2 813.56 304.68) translate(813.56 304.68) skewX(0) translate(-813.56 -304.68)"><rect x="804.20" y="299.28" width="18.72" height="10.80" rx="1.08" fill="#e8e8e8" stroke="#808080" stroke-width="0.95"/><polygon points="819.18,304.68 816.37,307.86 810.75,307.86 807.94,304.68 810.75,301.50 816.37,301.50" fill="none" stroke="#808080" stroke-width="0.90"/><polygon points="816.18,304.68 814.87,306.18 812.25,306.18 810.94,304.68 812.25,303.18 814.87,303.18" fill="none" stroke="#808080" stroke-width="0.90"/></g></g><g opacity="1.0"><g transform="rotate(-2 1131.05 240.90) translate(1131.05 240.90) skewX(22) translate(-1131.05 -240.90)"><rect x="1122.60" y="236.50" width="16.90" height="8.80" rx="0.88" fill="#dedede" stroke="#8a8a8a" stroke-width="0.9"/><path d="M1126.49 238.26L1135.61 243.54M1135.61 238.26L1126.49 243.54" stroke="#8a8a8a" stroke-width="0.99"/></g><g transform="rotate(-2 1137.20 253.66) translate(1137.20 253.66) skewX(22) translate(-1137.20 -253.66)"><rect x="1128.50" y="249.10" width="17.40" height="9.13" rx="0.91" fill="#dedede" stroke="#8a8a8a" stroke-width="0.9"/><path d="M1131.28 256.40h10.44" stroke="#8a8a8a" stroke-width="1.35"/><path d="M1135.11 254.40l1.74 -3.29l6.26 0.55l-1.39 3.29z" fill="#dedede" stroke="#8a8a8a" stroke-width="0.85"/><path d="M1134.76 253.48l-3.48 1.46" stroke="#8a8a8a" stroke-width="0.85"/></g><g transform="rotate(-2 1143.35 266.43) translate(1143.35 266.43) skewX(22) translate(-1143.35 -266.43)"><rect x="1134.40" y="261.70" width="17.90" height="9.46" rx="0.95" fill="#dedede" stroke="#8a8a8a" stroke-width="0.9"/><rect x="1137.62" y="263.59" width="11.46" height="5.68" fill="none" stroke="#8a8a8a" stroke-width="0.85"/><path d="M1137.62 265.67h11.46M1141.56 265.67v3.59M1141.56 267.38h7.52" stroke="#8a8a8a" stroke-width="0.85"/></g><g transform="rotate(-2 1149.50 279.19) translate(1149.50 279.19) skewX(22) translate(-1149.50 -279.19)"><rect x="1140.30" y="274.30" width="18.40" height="9.79" rx="0.98" fill="#dedede" stroke="#8a8a8a" stroke-width="0.9"/><rect x="1146.00" y="279.00" width="6.99" height="3.13" fill="#3c3c3c"/><path d="M1147.48 279.19v-0.98a2.02 1.76 0 0 1 4.05 0v0.39" fill="none" stroke="#3c3c3c" stroke-width="1.08"/></g><g transform="rotate(-2 1155.65 291.96) translate(1155.65 291.96) skewX(22) translate(-1155.65 -291.96)"><rect x="1146.20" y="286.90" width="18.90" height="10.12" rx="1.01" fill="#dedede" stroke="#8a8a8a" stroke-width="0.9"/><polygon points="1161.32,291.96 1158.48,294.94 1152.81,294.94 1149.98,291.96 1152.81,288.98 1158.48,288.98" fill="none" stroke="#8a8a8a" stroke-width="0.85"/><polygon points="1158.30,291.96 1156.97,293.36 1154.33,293.36 1153.00,291.96 1154.33,290.56 1156.97,290.56" fill="none" stroke="#8a8a8a" stroke-width="0.85"/></g></g><g opacity="1.0"><g transform="rotate(-3.5 831.50 470.15) translate(831.50 470.15) skewX(0) translate(-831.50 -470.15)"><rect x="820.90" y="463.40" width="21.20" height="13.50" rx="1.35" fill="#e9e9e9" stroke="#626262" stroke-width="1.25"/><path d="M825.78 466.10L837.22 474.20M837.22 466.10L825.78 474.20" stroke="#626262" stroke-width="1.38"/></g><g transform="rotate(-3.5 833.68 490.21) translate(833.68 490.21) skewX(0) translate(-833.68 -490.21)"><rect x="822.83" y="483.15" width="21.70" height="14.12" rx="1.41" fill="#e9e9e9" stroke="#626262" stroke-width="1.25"/><path d="M826.30 494.45h13.02" stroke="#626262" stroke-width="1.88"/><path d="M831.08 491.34l2.17 -5.08l7.81 0.85l-1.74 5.08z" fill="#e9e9e9" stroke="#626262" stroke-width="1.19"/><path d="M830.64 489.93l-4.34 2.26" stroke="#626262" stroke-width="1.19"/></g><g transform="rotate(-3.5 835.86 510.27) translate(835.86 510.27) skewX(0) translate(-835.86 -510.27)"><rect x="824.76" y="502.90" width="22.20" height="14.74" rx="1.47" fill="#e9e9e9" stroke="#626262" stroke-width="1.25"/><rect x="828.76" y="505.85" width="14.21" height="8.84" fill="none" stroke="#626262" stroke-width="1.19"/><path d="M828.76 509.09h14.21M833.64 509.09v5.60M833.64 511.74h9.32" stroke="#626262" stroke-width="1.19"/></g><g transform="rotate(-3.5 838.04 530.33) translate(838.04 530.33) skewX(0) translate(-838.04 -530.33)"><rect x="826.69" y="522.65" width="22.70" height="15.36" rx="1.54" fill="#e9e9e9" stroke="#626262" stroke-width="1.25"/><rect x="833.73" y="530.02" width="8.63" height="4.92" fill="#3c3c3c"/><path d="M835.54 530.33v-1.54a2.50 2.76 0 0 1 4.99 0v0.61" fill="none" stroke="#3c3c3c" stroke-width="1.50"/></g><g transform="rotate(-3.5 840.22 550.39) translate(840.22 550.39) skewX(0) translate(-840.22 -550.39)"><rect x="828.62" y="542.40" width="23.20" height="15.98" rx="1.60" fill="#e9e9e9" stroke="#626262" stroke-width="1.25"/><polygon points="847.18,550.39 843.70,555.10 836.74,555.10 833.26,550.39 836.74,545.68 843.70,545.68" fill="none" stroke="#626262" stroke-width="1.19"/><polygon points="843.47,550.39 841.84,552.60 838.60,552.60 836.97,550.39 838.60,548.18 841.84,548.18" fill="none" stroke="#626262" stroke-width="1.19"/></g></g><path d="M485.3 432.8L521 431.5" stroke="#d63a3a" stroke-width="1.6"/><path d="M518 430l5.4 1.4-5.3 1.8z" fill="#d63a3a"/><path d="M485.3 432.6L479.4 407" stroke="#1c1c70" stroke-width="1.3"/><path d="M478.5 403.4l2.6 5.2-4.2 1z" fill="#2a2ab0"/><path d="M485.3 432.8l1.6-10" stroke="#3a8a4a" stroke-width="0.8" opacity=".6"/></svg>
<span class="t" style="left:816.40px;top:401.00px;font-size:13.60px;line-height:18px;color:#cc5e36;font-weight:700;transform:scaleY(0.68);transform-origin:0 13px;">01</span>
<span class="t" style="left:1194.50px;top:383.00px;font-size:15.23px;line-height:20px;color:#cc5e36;font-weight:700;transform:scaleY(0.63);transform-origin:0 15px;">02</span>
<span class="t" style="left:848.70px;top:709.00px;font-size:18.47px;line-height:24px;color:#cc5e36;font-weight:700;transform:scaleY(0.84);transform-origin:0 18px;">03</span>
<div class="b" style="left:404.00px;top:61.00px;width:842.00px;height:2.40px;background:#f4f4f4;"></div>
<div class="b" style="left:448.00px;top:66.00px;width:758.00px;height:47.50px;background:#fafafa;border-radius:9px;"></div>
<svg class="b" style="left:404.00px;top:61.00px;" width="842.00" height="69.00" viewBox="404 61 842 69"><g fill="none" stroke="#454545" stroke-width="1.25" stroke-linejoin="round"><path d="M452.9 79H473.1V98.1H452.9Z"/><path d="M452.9 79L461.5 69.6H482.1L473.1 79M482.1 69.6V85M473.1 98.1L476 95"/><path d="M452.9 79H473.1" stroke-width="1.9"/><circle cx="481.8" cy="91.6" r="6.9" fill="#fafafa"/><path d="M477.4 91.6h8.8M481.8 87.2v8.8"/></g><g fill="none" stroke="#454545" stroke-width="1.15"><path d="M496.90 70.7V97.4M496.9 70.70H524.8M502.48 70.7V97.4M496.9 76.04H524.8M508.06 70.7V97.4M496.9 81.38H524.8M513.64 70.7V97.4M496.9 86.72H524.8M519.22 70.7V97.4M496.9 92.06H524.8M524.80 70.7V97.4M496.9 97.40H524.8"/><circle cx="522.6" cy="93.4" r="6.9" fill="#fafafa" stroke-width="1.25"/><path d="M518.2 93.4h8.8M522.6 89v8.8" stroke-width="1.25"/></g><g fill="none" stroke="#cbcbcb" stroke-width="1.1" stroke-linejoin="round"><path d="M554.4 70.9L572.4 75.4L567.9 92.1L550.5 87Z"/><path d="M550.5 87.4l-5 4.2M540.3 87.8l7.4 1.2-5.4 5.4z"/><rect x="543.2" y="97.2" width="28.1" height="3.2" rx="0.8"/><rect x="582.4" y="70.3" width="30.2" height="30.1"/><rect x="586.5" y="73.5" width="23.8" height="8.3"/><rect x="586.5" y="84.4" width="6.8" height="12.8"/><rect x="595.5" y="84.4" width="14.8" height="5.1"/><rect x="595.5" y="91.5" width="14.8" height="5.7"/><path d="M640.4 96.6H634.7V69.6H653.7L657.1 73V74.8"/><path d="M640.4 74.8H658.9L662.3 78.2V101.3H640.4Z"/><path d="M682.8 96.6H677.1V69.6H696.1L699.5 73V74.8"/><path d="M682.8 74.8H701.3L704.7 78.2V101.3H682.8Z"/><path d="M720.1 73.5H747.3"/><rect x="720.1" y="77.3" width="27.2" height="2"/><rect x="720.1" y="81.8" width="27.2" height="3.2"/><rect x="720.1" y="87.6" width="27.2" height="3.9"/><rect x="720.1" y="93.6" width="27.2" height="4.7"/><path d="M807.60 78.50L807.60 75.10L811.10 75.10L805.70 69.50L800.30 75.10L803.80 75.10L803.80 78.50ZM803.80 92.90L803.80 96.30L800.30 96.30L805.70 101.90L811.10 96.30L807.60 96.30L807.60 92.90ZM798.50 83.80L795.10 83.80L795.10 80.30L789.50 85.70L795.10 91.10L795.10 87.60L798.50 87.60ZM812.90 87.60L816.30 87.60L816.30 91.10L821.90 85.70L816.30 80.30L816.30 83.80L812.90 83.80Z"/><rect x="803.5" y="83.5" width="4.4" height="4.4"/><path d="M847.6 79.3L858.5 90.2L847.6 101.1L836.7 90.2Z"/><path d="M836 92.5A14.3 14.3 0 0 1 855.6 74.2"/><path d="M854.7 79.3L861.1 72.2L863 81.8Z"/><rect x="876.1" y="83.8" width="16.8" height="16.9"/><path d="M876.1 83.8V70.3H906.7V100.7H892.9" stroke-dasharray="2 2.4"/><path d="M894.5 82.5L901 76M897.2 74.8h5v5"/><path d="M933.6 70.9L951.6 75.4L947.1 92.1L929.8 87.6Z"/><path d="M929.8 84.5l-4.6 3M920.6 86.6l6.4 1.4-5 6.4z"/><rect x="922.1" y="97.2" width="28.2" height="3.2" rx="0.8"/><rect x="964.1" y="70.3" width="27.6" height="30.1"/><path d="M964.1 83.1H991.7M964.1 87.6H991.7"/><path d="M965.5 85.3H991" stroke-dasharray="1 1.3" stroke-width="3"/><path d="M1007.1 70.3H1036.3V100.4H1023.2V83.1H1007.1Z"/><rect x="1008.4" y="83.1" width="11.6" height="17.3" fill="#c4c4c4"/><rect x="1050.2" y="79.9" width="20.5" height="20.5"/><path d="M1050.2 79.9L1060.4 70.3H1079L1070.7 79.9M1079 70.3V90.8L1070.7 100.4"/><path d="M1055.4 82l1.6 4 .6 4 1.4 3.4 1 4.6" stroke-dasharray="1.6 1.2"/><path d="M1164.1 77.4H1173.5c-1.4 3 2.6 3.4 3.4.6 1.2 2 .4 5.6-.2 8.2 2.2-2 5-1.2 4.6 1.4M1164.1 77.4V101.7H1189.8V88.6H1181"/><path d="M1164.1 88.2c2.6.2 3.4 1.6 5.2 2 2.2-.4 3-2 5.6-2M1176.4 87.4c1.8 2.2-1.6 4 -.6 6.2 1.8 1.6 2.4 4 .2 8"/><path d="M1187.4 69.8L1195.6 77.6L1188.4 84.6c-2-1.4-4.4.4-3.2 2.4l-3-2.8c1.4-2-.6-3.8-2.4-2.6l-2.2-2.2z"/></g><path d="M770.4 71V100.4M1144.8 71V100.4" stroke="#9b9b9b" stroke-width="1.1"/><g fill="#fafafa" stroke="#cbcbcb" stroke-width="1" font-family="Liberation Sans, sans-serif"><text x="646.4" y="96" font-size="20.6" font-weight="700" textLength="11" lengthAdjust="spacingAndGlyphs" stroke-width=".9">0</text><text x="688.6" y="96" font-size="20.6" font-weight="700" textLength="11.6" lengthAdjust="spacingAndGlyphs" stroke-width=".9">P</text><text x="1092.6" y="100.1" font-size="41" font-weight="700">T</text><text x="1111.2" y="100.1" font-size="24" font-weight="700">a</text></g><text x="538.8" y="80" font-size="5.6" font-style="italic" font-weight="700" fill="#c9c9c9" font-family="Liberation Sans, sans-serif">auto</text></svg>
<svg class="b" style="left:0.00px;top:0.00px;font-family:&quot;Liberation Sans&quot;,sans-serif;" width="1246.00" height="856.00" viewBox="0 0 1246.00 856.00"><rect x="4.45" y="-5.55" width="339.70" height="29.50" rx="7.55" fill="none" stroke="#6fe648" stroke-width="4.9"/><rect x="54.80" y="32.90" width="567.00" height="24.00" rx="10.80" fill="none" stroke="#6fe648" stroke-width="4.4"/><rect x="4.65" y="65.75" width="395.30" height="103.00" rx="7.75" fill="none" stroke="#6fe648" stroke-width="4.5"/><rect x="0.25" y="181.75" width="397.80" height="76.70" rx="7.75" fill="none" stroke="#6fe648" stroke-width="4.5"/><rect x="4.05" y="272.85" width="395.90" height="604.90" rx="7.75" fill="none" stroke="#6fe648" stroke-width="4.5"/><rect x="448.30" y="66.10" width="757.40" height="47.10" rx="8.70" fill="none" stroke="#6fe648" stroke-width="4.6"/><rect x="459.35" y="191.65" width="384.00" height="255.80" rx="9.65" fill="none" stroke="#6fe648" stroke-width="4.7"/><rect x="926.45" y="29.65" width="295.30" height="27.30" rx="11.55" fill="none" stroke="#6fe648" stroke-width="4.9"/><circle cx="365.7" cy="5.7" r="18.35" fill="#fbfbff"/><circle cx="365.7" cy="5.7" r="16.45" fill="#3636ea"/><text x="365.00" y="12.80" text-anchor="middle" font-size="22.4" fill="#fff" stroke="#fff" stroke-width="0.9" stroke-linejoin="round">1</text><circle cx="631.5" cy="36.5" r="18.35" fill="#fbfbff"/><circle cx="631.5" cy="36.5" r="16.45" fill="#3636ea"/><text x="630.80" y="43.60" text-anchor="middle" font-size="22.4" fill="#fff" stroke="#fff" stroke-width="0.9" stroke-linejoin="round">2</text><circle cx="406.2" cy="165.5" r="18.35" fill="#fbfbff"/><circle cx="406.2" cy="165.5" r="16.45" fill="#3636ea"/><text x="405.50" y="172.60" text-anchor="middle" font-size="22.4" fill="#fff" stroke="#fff" stroke-width="0.9" stroke-linejoin="round">3</text><circle cx="407.0" cy="255.2" r="18.35" fill="#fbfbff"/><circle cx="407.0" cy="255.2" r="16.45" fill="#3636ea"/><text x="406.30" y="262.30" text-anchor="middle" font-size="22.4" fill="#fff" stroke="#fff" stroke-width="0.9" stroke-linejoin="round">4</text><circle cx="408.0" cy="348.5" r="18.35" fill="#fbfbff"/><circle cx="408.0" cy="348.5" r="16.45" fill="#3636ea"/><text x="407.30" y="355.60" text-anchor="middle" font-size="22.4" fill="#fff" stroke="#fff" stroke-width="0.9" stroke-linejoin="round">5</text><circle cx="471.5" cy="124.4" r="18.35" fill="#fbfbff"/><circle cx="471.5" cy="124.4" r="16.45" fill="#3636ea"/><text x="470.80" y="131.50" text-anchor="middle" font-size="22.4" fill="#fff" stroke="#fff" stroke-width="0.9" stroke-linejoin="round">6</text><circle cx="469.7" cy="203.9" r="18.35" fill="#fbfbff"/><circle cx="469.7" cy="203.9" r="16.45" fill="#3636ea"/><text x="469.00" y="211.00" text-anchor="middle" font-size="22.4" fill="#fff" stroke="#fff" stroke-width="0.9" stroke-linejoin="round">7</text><circle cx="913" cy="46.5" r="18.35" fill="#fbfbff"/><circle cx="913" cy="46.5" r="16.45" fill="#3636ea"/><text x="912.30" y="53.60" text-anchor="middle" font-size="22.4" fill="#fff" stroke="#fff" stroke-width="0.9" stroke-linejoin="round">8</text></svg>
</body></html>
